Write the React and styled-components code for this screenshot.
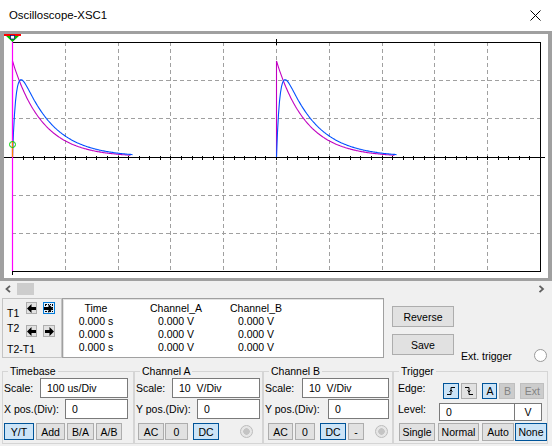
import styled, { createGlobalStyle } from 'styled-components';

const GlobalStyle = createGlobalStyle`
  html, body {
    margin: 0;
    padding: 0;
  }
  body {
    width: 552px;
    height: 446px;
    overflow: hidden;
    background: #f0f0f0;
    font-family: 'Liberation Sans', Arial, sans-serif;
    font-size: 10.5px;
    color: #000;
  }
`;

// plot geometry, in page pixels
const GX0 = 12;
const GX1 = 540;
const GY0 = 42;
const GY1 = 271;
const DX = (GX1 - GX0) / 10;
const DY = (GY1 - GY0) / 6;
const AXIS = 157;

const magentaPath = (x0) => {
  let d = `M${x0 + 0.5} ${AXIS} L${x0 + 0.5} 61`;
  for (let t = 1; t <= 118; t++) {
    d += ` L${x0 + t + 0.5} ${(AXIS - 96 * Math.exp(-t / 29.6)).toFixed(1)}`;
  }
  return d;
};

const bluePath = (x0) => {
  let d = `M${x0 + 0.5} ${AXIS}`;
  for (let t = 1; t <= 120; t++) {
    const v = 115 * (Math.exp(-t / 31) - Math.exp(-t / 3.5));
    d += ` L${x0 + t + 0.5} ${(AXIS - v).toFixed(1)}`;
  }
  return d;
};

const Scope = () => {
  const vLines = [];
  for (let i = 1; i < 10; i++) vLines.push(Math.round(GX0 + i * DX) + 0.5);
  const hLines = [1, 2, 4, 5].map((j) => Math.round(GY0 + j * DY) + 0.5);
  const ticks = [];
  for (let k = 0; k <= 50; k++) ticks.push(Math.round(GX0 + k * (DX / 5)) + 0.5);

  return (
    <Plot viewBox='4 34 544 244' width='544' height='244'>
      <g stroke='#a0a0a0' strokeWidth='1' strokeDasharray='4 3' shapeRendering='crispEdges'>
        {vLines.map((x) => (
          <line key={`v${x}`} x1={x} y1={GY0} x2={x} y2={GY1} />
        ))}
        {hLines.map((y) => (
          <line key={`h${y}`} x1={GX0} y1={y} x2={GX1} y2={y} />
        ))}
      </g>
      <g stroke='#000' strokeWidth='1' shapeRendering='crispEdges' fill='none'>
        <path d={`M${GX0} ${GY0 + 0.5} H${GX1 + 0.5} V${GY1 + 0.5} H${GX0}`} />
        <line x1='4' y1={AXIS + 0.5} x2='545' y2={AXIS + 0.5} />
        {ticks.map((x) => (
          <line key={`t${x}`} x1={x} y1={AXIS - 1} x2={x} y2={AXIS + 3} />
        ))}
        <line x1='276.5' y1='39' x2='276.5' y2='45' />
        <line x1='12.5' y1={GY1} x2='12.5' y2='275' />
      </g>
      <g fill='none' strokeWidth='1.1'>
        <path d={magentaPath(12)} stroke='#c000c0' />
        <path d={magentaPath(276)} stroke='#c000c0' />
        <path d={bluePath(12)} stroke='#0050ff' />
        <path d={bluePath(276)} stroke='#0050ff' />
      </g>
      <line x1='12.5' y1='34' x2='12.5' y2={GY1} stroke='#ff00ff' strokeWidth='1.2' />
      <line x1='12.5' y1='141' x2='12.5' y2={AXIS} stroke='#ff8000' strokeWidth='1.2' />
      <circle cx='12.5' cy='144.5' r='3' fill='none' stroke='#00d000' strokeWidth='1' />
      <polygon points='5,35 20,35 12.5,42' fill='#00c000' />
      <rect x='4' y='34' width='17' height='2' fill='#ff0000' />
      <rect x='10.5' y='35.5' width='4' height='3.5' fill='#fff' stroke='#000080' strokeWidth='0.7' />
    </Plot>
  );
};

const ArrowIcon = ({ dir }) => (
  <svg width='9' height='9' viewBox='0 0 9 9'>
    <path
      d='M0 4.5 L4.5 0 V3 H9 V6 H4.5 V9 Z'
      fill='#000'
      transform={dir === 'right' ? 'translate(9 0) scale(-1 1)' : undefined}
    />
  </svg>
);

const EdgeIcon = ({ falling }) => (
  <svg width='10' height='10' viewBox='0 0 10 10'>
    <path
      d={falling ? 'M1 1.5 H5 V8.5 H9' : 'M1 8.5 H5 V1.5 H9'}
      fill='none'
      stroke='#000'
      strokeWidth='1'
    />
    <path
      d={falling ? 'M3.5 4.5 L5 6 L6.5 4.5' : 'M3.5 5.5 L5 4 L6.5 5.5'}
      fill='none'
      stroke='#000'
      strokeWidth='1'
    />
  </svg>
);

const Chevron = ({ right }) => (
  <svg width='7' height='8' viewBox='0 0 7 8'>
    <polyline
      points={right ? '1.5,0.8 5,4 1.5,7.2' : '5,0.8 1.5,4 5,7.2'}
      fill='none'
      stroke='#606060'
      strokeWidth='1.8'
    />
  </svg>
);

const App = () => {
  return (
    <>
      <GlobalStyle />
      <Window>
        <TitleBar>
          <Title>Oscilloscope-XSC1</Title>
          <svg width='11' height='11' viewBox='0 0 11 11'>
            <path d='M0.5 0.5 L10.5 10.5 M10.5 0.5 L0.5 10.5' stroke='#000' strokeWidth='1' />
          </svg>
        </TitleBar>

        <Screen>
          <Scope />
        </Screen>

        <ScrollBar>
          <Chevron />
          <Thumb />
          <Spacer />
          <Chevron right />
        </ScrollBar>

        <TopRow>
          <CursorBox>
            <CursorRow $mt={3}>
              <CursorLabel $mt={6}>T1</CursorLabel>
              <ArrowButton>
                <ArrowIcon dir='left' />
              </ArrowButton>
              <ArrowButton $active $w={13}>
                <ArrowIcon dir='right' />
              </ArrowButton>
            </CursorRow>
            <CursorRow $mt={6}>
              <CursorLabel $mt={-2}>T2</CursorLabel>
              <ArrowButton>
                <ArrowIcon dir='left' />
              </ArrowButton>
              <ArrowButton $w={12}>
                <ArrowIcon dir='right' />
              </ArrowButton>
            </CursorRow>
            <CursorRow $mt={7}>
              <CursorLabel>T2-T1</CursorLabel>
            </CursorRow>
          </CursorBox>

          <Readout>
            <Cell>Time</Cell>
            <Cell>Channel_A</Cell>
            <Cell>Channel_B</Cell>
            {[0, 1, 2].map((r) => (
              <Row key={r}>
                <Cell>0.000 s</Cell>
                <Cell>0.000 V</Cell>
                <Cell>0.000 V</Cell>
              </Row>
            ))}
          </Readout>

          <SideButtons>
            <PushButton>Reverse</PushButton>
            <PushButton>Save</PushButton>
          </SideButtons>

          <ExtTrigger>
            <span>Ext. trigger</span>
            <Radio />
          </ExtTrigger>
        </TopRow>

        <Controls>
          <Group $w={132} $pr={5}>
            <Legend>Timebase</Legend>
            <FieldRow>
              <Label>Scale:</Label>
              <Field $w={88}>100 us/Div</Field>
            </FieldRow>
            <FieldRow>
              <Label>X pos.(Div):</Label>
              <Field $w={63}>0</Field>
            </FieldRow>
            <ButtonRow>
              <Btn $w={30} $active>Y/T</Btn>
              <Btn $w={29}>Add</Btn>
              <Btn $w={27}>B/A</Btn>
              <Btn $w={26}>A/B</Btn>
            </ButtonRow>
          </Group>

          <Group $w={129} $pr={2}>
            <Legend>Channel A</Legend>
            <FieldRow>
              <Label>Scale:</Label>
              <Field $w={88}>10  V/Div</Field>
            </FieldRow>
            <FieldRow>
              <Label>Y pos.(Div):</Label>
              <Field $w={63}>0</Field>
            </FieldRow>
            <ButtonRow>
              <Btn $w={26} $ml={2}>AC</Btn>
              <Btn $w={23} $ml={-1}>0</Btn>
              <Btn $w={26} $ml={3} $active>DC</Btn>
              <Radio $disabled $mr={7} />
            </ButtonRow>
          </Group>

          <Group $w={130} $pr={3}>
            <Legend>Channel B</Legend>
            <FieldRow>
              <Label>Scale:</Label>
              <Field $w={87}>10  V/Div</Field>
            </FieldRow>
            <FieldRow>
              <Label>Y pos.(Div):</Label>
              <Field $w={61}>0</Field>
            </FieldRow>
            <ButtonRow>
              <Btn $w={25} $ml={3}>AC</Btn>
              <Btn $w={20}>0</Btn>
              <Btn $w={26} $ml={3} $active>DC</Btn>
              <Btn $w={16}>-</Btn>
              <Radio $disabled $mr={1} />
            </ButtonRow>
          </Group>

          <Group $w={155} $pr={4}>
            <Legend>Trigger</Legend>
            <EdgeRow>
              <Label $ml={3}>Edge:</Label>
              <Btn $w={16} $h={16} $ml={16} $active>
                <EdgeIcon />
              </Btn>
              <Btn $w={16} $h={16}>
                <EdgeIcon falling />
              </Btn>
              <Btn $w={15} $h={16} $ml={3} $active>A</Btn>
              <Btn $w={16} $h={16} $disabled>B</Btn>
              <Btn $w={24} $h={16} $ml={3} $disabled>Ext</Btn>
            </EdgeRow>
            <LevelRow>
              <Label $ml={3} $mt={0}>Level:</Label>
              <LevelInputs>
                <Field $w={76} $h={18}>0</Field>
                <UnitBox>V</UnitBox>
              </LevelInputs>
            </LevelRow>
            <ButtonRow $mt={2} $h={18}>
              <Btn $w={36} $h={18} $ml={4}>Single</Btn>
              <Btn $w={41} $h={18} $ml={1}>Normal</Btn>
              <Btn $w={32} $h={18} $ml={1}>Auto</Btn>
              <Btn $w={32} $h={18} $ml={-1} $active>None</Btn>
            </ButtonRow>
          </Group>
        </Controls>
      </Window>
    </>
  );
};

const Window = styled.div`
  width: 552px;
  height: 446px;
  display: flex;
  flex-direction: column;
  background: #f0f0f0;
  overflow: hidden;
`;

const TitleBar = styled.div`
  flex: none;
  height: 31px;
  box-sizing: border-box;
  background: #fff;
  display: flex;
  align-items: center;
  justify-content: space-between;
  padding: 0 11px 1px 9px;
`;

const Title = styled.span`
  font-size: 11.4px;
`;

const Screen = styled.div`
  flex: none;
  height: 250px;
  box-sizing: border-box;
  border: 3px solid #a0a0a0;
  border-left-width: 4px;
  border-right-width: 4px;
  background: #fff;
`;

const Plot = styled.svg`
  display: block;
`;

const ScrollBar = styled.div`
  flex: none;
  height: 15px;
  display: flex;
  align-items: center;
  padding: 0 7px 0 5px;
  gap: 5px;
`;

const Thumb = styled.div`
  width: 17px;
  height: 12px;
  background: #cdcdcd;
`;

const Spacer = styled.div`
  flex: 1;
`;

const TopRow = styled.div`
  flex: none;
  display: flex;
  height: 60px;
  margin-top: 2px;
  padding-left: 2px;
`;

const CursorBox = styled.div`
  width: 60px;
  height: 60px;
  box-sizing: border-box;
  border: 1px solid #c4c4c4;
  padding-left: 4px;
  display: flex;
  flex-direction: column;
`;

const CursorRow = styled.div`
  display: flex;
  align-items: flex-start;
  margin-top: ${(p) => p.$mt || 0}px;
`;

const CursorLabel = styled.span`
  width: 20px;
  line-height: 11px;
  margin-top: ${(p) => p.$mt || 0}px;
  white-space: nowrap;
`;

const ArrowButton = styled.div`
  width: ${(p) => p.$w || 11}px;
  height: 12px;
  box-sizing: border-box;
  margin-right: 6px;
  display: flex;
  align-items: center;
  justify-content: center;
  background: ${(p) => (p.$active ? '#e5f1fb' : '#e1e1e1')};
  border: 1px solid ${(p) => (p.$active ? '#0078d7' : '#adadad')};
  outline: ${(p) => (p.$active ? '1px dotted #000' : 'none')};
  outline-offset: -3px;
`;

const Readout = styled.div`
  width: 322px;
  height: 60px;
  box-sizing: border-box;
  background: #fff;
  border: 1px solid #a0a0a0;
  box-shadow: inset 1px 1px 0 #e3e3e3;
  padding: 3px 0 0 3px;
  display: grid;
  grid-template-columns: 60px 60px 60px;
  grid-auto-rows: 13px;
  column-gap: 20px;
  align-content: start;
`;

const Row = styled.div`
  display: contents;
`;

const Cell = styled.span`
  line-height: 13px;
  text-align: center;
  white-space: nowrap;
`;

const SideButtons = styled.div`
  display: flex;
  flex-direction: column;
  gap: 7px;
  margin-left: 8px;
  padding-top: 8px;
`;

const PushButton = styled.div`
  width: 62px;
  height: 21px;
  box-sizing: border-box;
  background: #e1e1e1;
  border: 1px solid #adadad;
  display: flex;
  align-items: center;
  justify-content: center;
`;

const ExtTrigger = styled.div`
  width: 86px;
  margin-left: 7px;
  align-self: flex-end;
  margin-bottom: -4px;
  display: flex;
  align-items: center;
  justify-content: space-between;
`;

const Radio = styled.div`
  width: 13px;
  height: 13px;
  box-sizing: border-box;
  border-radius: 50%;
  border: 1px solid ${(p) => (p.$disabled ? '#bcbcbc' : '#9a9a9a')};
  background: ${(p) => (p.$disabled ? 'radial-gradient(circle, #c4c4c4 0 3px, #e6e6e6 3.5px)' : '#fff')};
  margin-left: ${(p) => (p.$disabled ? 'auto' : '0')};
  margin-right: ${(p) => p.$mr || 0}px;
  align-self: center;
`;

const Controls = styled.div`
  flex: none;
  display: flex;
  margin-top: 7px;
  padding-left: 2px;
`;

const Group = styled.fieldset`
  width: ${(p) => p.$w}px;
  height: 79px;
  box-sizing: border-box;
  min-width: 0;
  margin: 0;
  padding: 0 ${(p) => p.$pr}px 0 1px;
  border: 1px solid #d5d5d5;
  display: flex;
  flex-direction: column;
`;

const Legend = styled.legend`
  margin-left: 4px;
  padding: 0 2px;
  line-height: 13px;
`;

const FieldRow = styled.div`
  height: 20px;
  margin-bottom: 1px;
  display: flex;
  align-items: center;
  justify-content: space-between;
`;

const Label = styled.span`
  margin-left: ${(p) => p.$ml || 0}px;
  white-space: nowrap;
  align-self: ${(p) => (p.$mt !== undefined ? 'flex-start' : 'center')};
  line-height: 13px;
`;

const Field = styled.div`
  width: ${(p) => p.$w}px;
  height: ${(p) => p.$h || 20}px;
  box-sizing: border-box;
  background: #fff;
  border: 1px solid #7a7a7a;
  padding-left: 6px;
  display: flex;
  align-items: center;
  white-space: pre;
`;

const ButtonRow = styled.div`
  display: flex;
  align-items: center;
  gap: 2px;
  height: ${(p) => p.$h || 17}px;
  margin-top: ${(p) => (p.$mt !== undefined ? p.$mt : 3)}px;
`;

const Btn = styled.div`
  width: ${(p) => p.$w}px;
  height: ${(p) => p.$h || 17}px;
  margin-left: ${(p) => p.$ml || 0}px;
  box-sizing: border-box;
  flex: none;
  display: flex;
  align-items: center;
  justify-content: center;
  white-space: nowrap;
  color: ${(p) => (p.$disabled ? '#838383' : '#000')};
  background: ${(p) => (p.$active ? '#cce4f7' : p.$disabled ? '#cccccc' : '#e1e1e1')};
  border: 1px solid ${(p) => (p.$active ? '#005499' : p.$disabled ? '#bfbfbf' : '#adadad')};
`;

const EdgeRow = styled.div`
  height: 21px;
  display: flex;
  align-items: flex-end;
  gap: 2px;
`;

const LevelRow = styled.div`
  height: 18px;
  margin-top: 4px;
  display: flex;
  align-items: center;
  justify-content: space-between;
`;

const LevelInputs = styled.div`
  display: flex;
  margin-right: 1px;
`;

const UnitBox = styled.div`
  width: 27px;
  height: 18px;
  box-sizing: border-box;
  background: #fff;
  border: 1px solid #7a7a7a;
  border-left: none;
  display: flex;
  align-items: center;
  justify-content: center;
`;

export default App;
